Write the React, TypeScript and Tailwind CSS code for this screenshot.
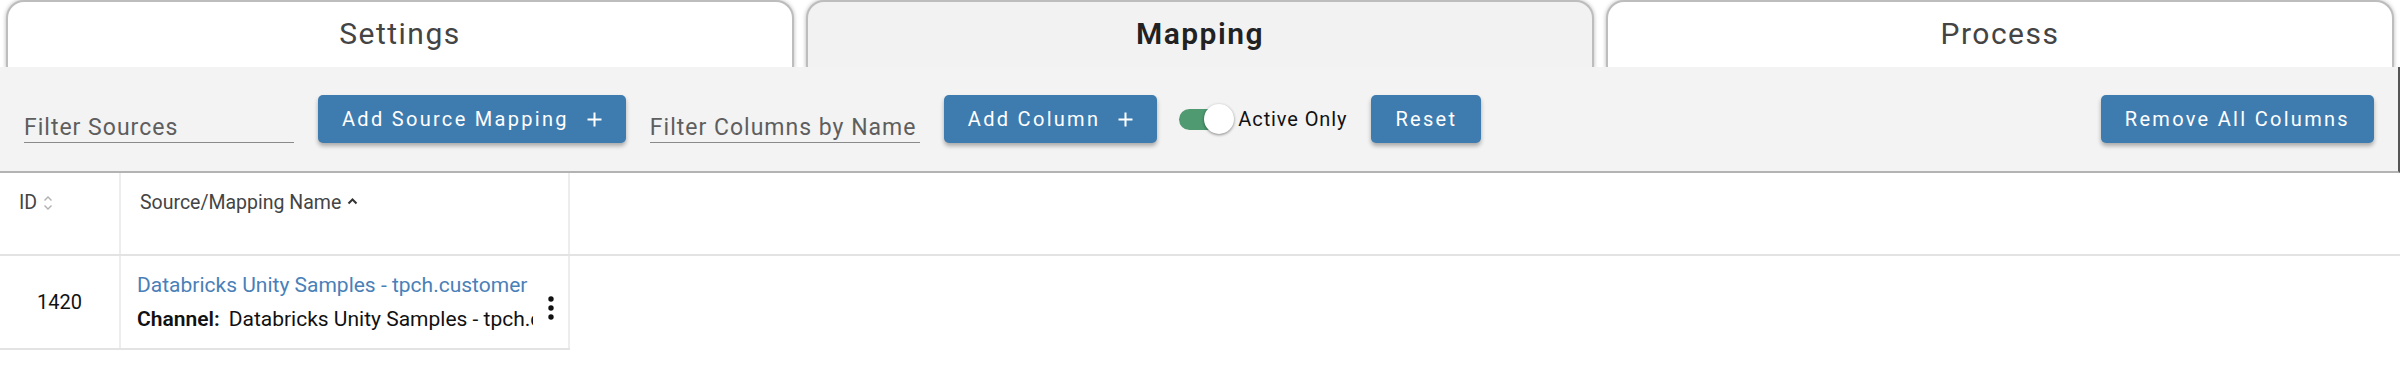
import React from "react";

function Tab({ label, active }: { label: string; active?: boolean }) {
  return (
    <div
      className={
        "flex-1 h-[69px] rounded-t-[18px] border-2 border-b-0 border-[#bdbdbd] shadow-[0_0_4px_rgba(0,0,0,0.28)] text-center pt-[17px] text-[30px] leading-[30px] tracking-[1.5px] " +
        (active ? "bg-[#f2f2f2] text-[#222] font-semibold tracking-[1.2px]" : "bg-white text-[#444]")
      }
    >
      {label}
    </div>
  );
}

function Plus() {
  return (
    <svg width="15" height="15" viewBox="0 0 15 15" className="shrink-0">
      <path d="M7.5 0.5v14M0.5 7.5h14" stroke="white" strokeWidth="2" />
    </svg>
  );
}

function Btn({ children, plus }: { children: React.ReactNode; plus?: boolean }) {
  return (
    <button className="h-[48px] shrink-0 px-[24px] rounded-[5px] bg-[#3e7cb0] text-white text-[20px] tracking-[2.3px] shadow-[0_3px_4px_rgba(0,0,0,0.3)] flex items-center gap-[18px]">
      <span className="whitespace-nowrap">{children}</span>
      {plus && <Plus />}
    </button>
  );
}

function FilterInput({ placeholder }: { placeholder: string }) {
  return (
    <div className="w-[270px] h-[48px] shrink-0 flex items-end border-b border-[#8a8a8a] pb-0">
      <input
        placeholder={placeholder}
        className="w-full bg-transparent outline-none text-[23px] leading-[28px] tracking-[1px] text-[#333] placeholder:text-[#5e5e5e]"
      />
    </div>
  );
}

export default function App() {
  return (
    <div className="w-[2400px] h-[365px] bg-white overflow-hidden font-[Roboto,sans-serif]">
      <div className="flex gap-[12px] px-[6px] h-[67px] bg-white">
        <Tab label="Settings" />
        <Tab label="Mapping" active />
        <Tab label="Process" />
      </div>

      <div className="relative flex items-center h-[106px] px-[24px] gap-[24px] bg-[#f3f3f3] border-b-2 border-b-[#b3b3b3] border-r-2 border-r-[#555]">
        <FilterInput placeholder="Filter Sources" />
        <Btn plus>Add Source Mapping</Btn>
        <FilterInput placeholder="Filter Columns by Name" />
        <Btn plus>Add Column</Btn>
        <div className="flex items-center gap-[4px] shrink-0 -ml-[2px]">
          <div className="relative w-[55px] h-[30px] flex items-center">
            <div className="w-[51px] h-[21px] rounded-full bg-[#4f9a70]" />
            <div className="absolute right-0 top-0 w-[30px] h-[30px] rounded-full bg-white shadow-[0_1px_3px_rgba(0,0,0,0.45)]" />
          </div>
          <span className="text-[20px] text-[#111] tracking-[0.9px] whitespace-nowrap">Active Only</span>
        </div>
        <Btn>Reset</Btn>
        <div className="ml-auto">
          <Btn>Remove All Columns</Btn>
        </div>
      </div>

      <div className="flex h-[83px] border-b-2 border-[#e3e3e3]">
        <div className="w-[121px] border-r-2 border-[#ededed] pl-[19px] pt-[16px] flex items-start gap-[6px] text-[19.5px] leading-[28px] text-[#444]">
          <span>ID</span>
          <svg width="10" height="16" viewBox="0 0 10 16" className="mt-[6px]">
            <path d="M1.5 5.5L5 2l3.5 3.5M1.5 10.5L5 14l3.5-3.5" fill="none" stroke="#b0b0b0" strokeWidth="1.4" />
          </svg>
        </div>
        <div className="w-[449px] border-r-2 border-[#ededed] pl-[19px] pt-[16px] flex items-start gap-[6px] text-[19.5px] leading-[28px] text-[#444]">
          <span>Source/Mapping Name</span>
          <svg width="11" height="8" viewBox="0 0 11 8" className="mt-[8px]">
            <path d="M1.5 6.5L5.5 2.5 9.5 6.5" fill="none" stroke="#333" strokeWidth="2" />
          </svg>
        </div>
        <div className="flex-1" />
      </div>

      <div className="flex w-[570px] h-[94px] border-b-2 border-[#e3e3e3]">
        <div className="w-[121px] border-r-2 border-[#ededed] flex items-center justify-center text-[20px] leading-[30px] text-[#111]">
          1420
        </div>
        <div className="w-[449px] border-r-2 border-[#ededed] flex items-center pl-[16px]">
          <div className="w-[396px] overflow-hidden whitespace-nowrap text-[21px] leading-[34px]">
            <div className="text-[#4a80b8]">Databricks Unity Samples - tpch.customer</div>
            <div className="text-[#111]">
              <span className="font-semibold">Channel:</span>
              <span className="ml-[9px]">Databricks Unity Samples - tpch.customer</span>
            </div>
          </div>
          <svg width="8" height="26" viewBox="0 0 8 26" className="ml-[14px] mt-[12px] shrink-0">
            <circle cx="4" cy="4" r="2.7" fill="#111" />
            <circle cx="4" cy="13" r="2.7" fill="#111" />
            <circle cx="4" cy="22" r="2.7" fill="#111" />
          </svg>
        </div>
      </div>
    </div>
  );
}
